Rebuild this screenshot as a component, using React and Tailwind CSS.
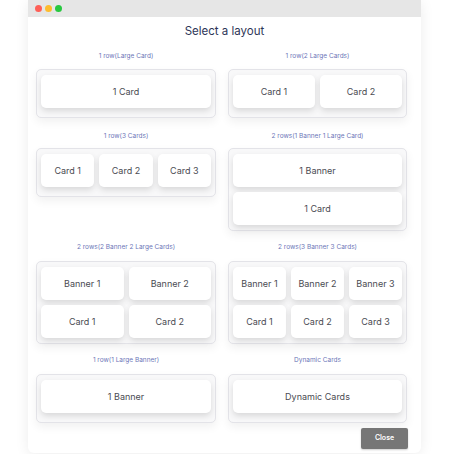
import React from 'react';

const Card = ({ children }) => (
  <div className="h-[33px] flex-1 min-w-0 flex items-center justify-center bg-white rounded-[5px] shadow-[0_3px_6px_rgba(0,0,0,0.13)] text-[9px] text-[#4a4b52]">
    {children}
  </div>
);

const Panel = ({ rows, single }) => (
  <div
    className={`border border-[#e3e3e8] rounded-[5px] bg-[#f8f8f9] shadow-[0_4px_10px_rgba(0,0,0,0.06)] px-[4px] pt-[5px] flex flex-col gap-[5px] ${single ? 'pb-[9px]' : 'pb-[5px]'}`}
  >
    {rows.map((row, i) => (
      <div key={i} className="flex gap-[5px]">
        {row.map((c) => (
          <Card key={c}>{c}</Card>
        ))}
      </div>
    ))}
  </div>
);

const Cell = ({ label, rows, mb }) => (
  <div className="flex flex-col">
    <p className={`text-center text-[6.5px] leading-[8px] text-[#6d76b8] ${mb}`}>{label}</p>
    <Panel rows={rows} single={rows.length === 1} />
  </div>
);

const LAYOUT_ROWS = [
  {
    mt: 'mt-[13px]',
    mb: 'mb-[9px]',
    cells: [
      { label: '1 row(Large Card)', rows: [['1 Card']] },
      { label: '1 row(2 Large Cards)', rows: [['Card 1', 'Card 2']] },
    ],
  },
  {
    mt: 'mt-[14px]',
    mb: 'mb-[8px]',
    cells: [
      { label: '1 row(3 Cards)', rows: [['Card 1', 'Card 2', 'Card 3']] },
      { label: '2 rows(1 Banner 1 Large Card)', rows: [['1 Banner'], ['1 Card']] },
    ],
  },
  {
    mt: 'mt-[12px]',
    mb: 'mb-[10px]',
    cells: [
      { label: '2 rows(2 Banner 2 Large Cards)', rows: [['Banner 1', 'Banner 2'], ['Card 1', 'Card 2']] },
      { label: '2 rows(3 Banner 3 Cards)', rows: [['Banner 1', 'Banner 2', 'Banner 3'], ['Card 1', 'Card 2', 'Card 3']] },
    ],
  },
  {
    mt: 'mt-[12px]',
    mb: 'mb-[10px]',
    cells: [
      { label: '1 row(1 Large Banner)', rows: [['1 Banner']] },
      { label: 'Dynamic Cards', rows: [['Dynamic Cards']] },
    ],
  },
];

export default function App() {
  return (
    <div className="w-[451px] h-[454px] bg-white overflow-hidden font-['Inter',sans-serif]">
      <div className="ml-[28px] w-[393px] h-[453px] bg-white rounded-b-[6px] shadow-[0_2px_14px_rgba(0,0,0,0.08)] flex flex-col">
        <div className="h-[17px] bg-[#e6e6e6] flex items-center gap-[3px] pl-[7px]">
          <span className="w-[7px] h-[7px] rounded-full bg-[#fe5f57]" />
          <span className="w-[7px] h-[7px] rounded-full bg-[#febc2e]" />
          <span className="w-[7px] h-[7px] rounded-full bg-[#28c840]" />
        </div>
        <h1 className="mt-[6px] text-center text-[11.5px] leading-[16px] text-[#2e3658] font-normal">Select a layout</h1>
        <div className="pl-[8px] flex flex-col">
          {LAYOUT_ROWS.map((r, i) => (
            <div key={i} className={`grid grid-cols-[180px_179px] gap-x-[12px] items-start ${r.mt}`}>
              {r.cells.map((c) => (
                <Cell key={c.label} label={c.label} rows={c.rows} mb={r.mb} />
              ))}
            </div>
          ))}
        </div>
        <div className="flex justify-end pr-[13px] mt-[5px]">
          <button className="w-[47px] h-[21px] bg-[#767676] rounded-[2px] text-white text-[7px] font-semibold shadow-[0_1px_2px_rgba(0,0,0,0.2)]">
            Close
          </button>
        </div>
      </div>
    </div>
  );
}
